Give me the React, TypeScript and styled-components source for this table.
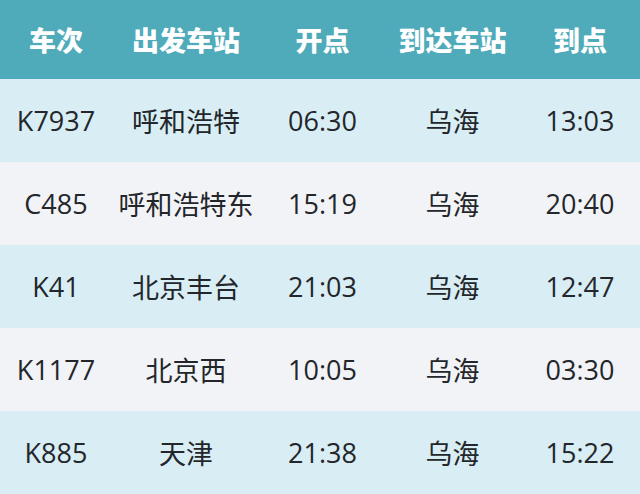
import React from "react";
import styled, { createGlobalStyle } from "styled-components";

const GlobalStyle = createGlobalStyle`
  html, body {
    margin: 0;
    padding: 0;
    background: #f2f3f6;
  }
  body {
    font-family: "Open Sans", "Noto Sans CJK SC", sans-serif;
  }
`;

const columns = "112px 148px 125px 135px 120px";

type Train = {
  code: string;
  from: string;
  depart: string;
  to: string;
  arrive: string;
};

const trains: Train[] = [
  { code: "K7937", from: "呼和浩特", depart: "06:30", to: "乌海", arrive: "13:03" },
  { code: "C485", from: "呼和浩特东", depart: "15:19", to: "乌海", arrive: "20:40" },
  { code: "K41", from: "北京丰台", depart: "21:03", to: "乌海", arrive: "12:47" },
  { code: "K1177", from: "北京西", depart: "10:05", to: "乌海", arrive: "03:30" },
  { code: "K885", from: "天津", depart: "21:38", to: "乌海", arrive: "15:22" },
];

const Table = styled.div`
  width: 640px;
  height: 494px;
  display: flex;
  flex-direction: column;
  overflow: hidden;
`;

const HeaderRow = styled.div`
  display: grid;
  grid-template-columns: ${columns};
  height: 79px;
  background: #4faaba;
`;

const HeadCell = styled.div`
  display: flex;
  align-items: center;
  justify-content: center;
  color: #ffffff;
  font-family: "Noto Sans CJK SC", sans-serif;
  font-size: 27px;
  font-weight: 900;
`;

const Row = styled.div<{ $striped: boolean }>`
  display: grid;
  grid-template-columns: ${columns};
  height: 83px;
  background: ${(p) => (p.$striped ? "#d8edf4" : "#f2f3f6")};
`;

const Cell = styled.div`
  display: flex;
  align-items: center;
  justify-content: center;
  color: #23262a;
  font-size: 27px;
  font-weight: 400;
  white-space: nowrap;
`;

export default function App() {
  return (
    <>
      <GlobalStyle />
      <Table>
        <HeaderRow>
          <HeadCell>车次</HeadCell>
          <HeadCell>出发车站</HeadCell>
          <HeadCell>开点</HeadCell>
          <HeadCell>到达车站</HeadCell>
          <HeadCell>到点</HeadCell>
        </HeaderRow>
        {trains.map((t, i) => (
          <Row key={t.code} $striped={i % 2 === 0}>
            <Cell>{t.code}</Cell>
            <Cell>{t.from}</Cell>
            <Cell>{t.depart}</Cell>
            <Cell>{t.to}</Cell>
            <Cell>{t.arrive}</Cell>
          </Row>
        ))}
      </Table>
    </>
  );
}
